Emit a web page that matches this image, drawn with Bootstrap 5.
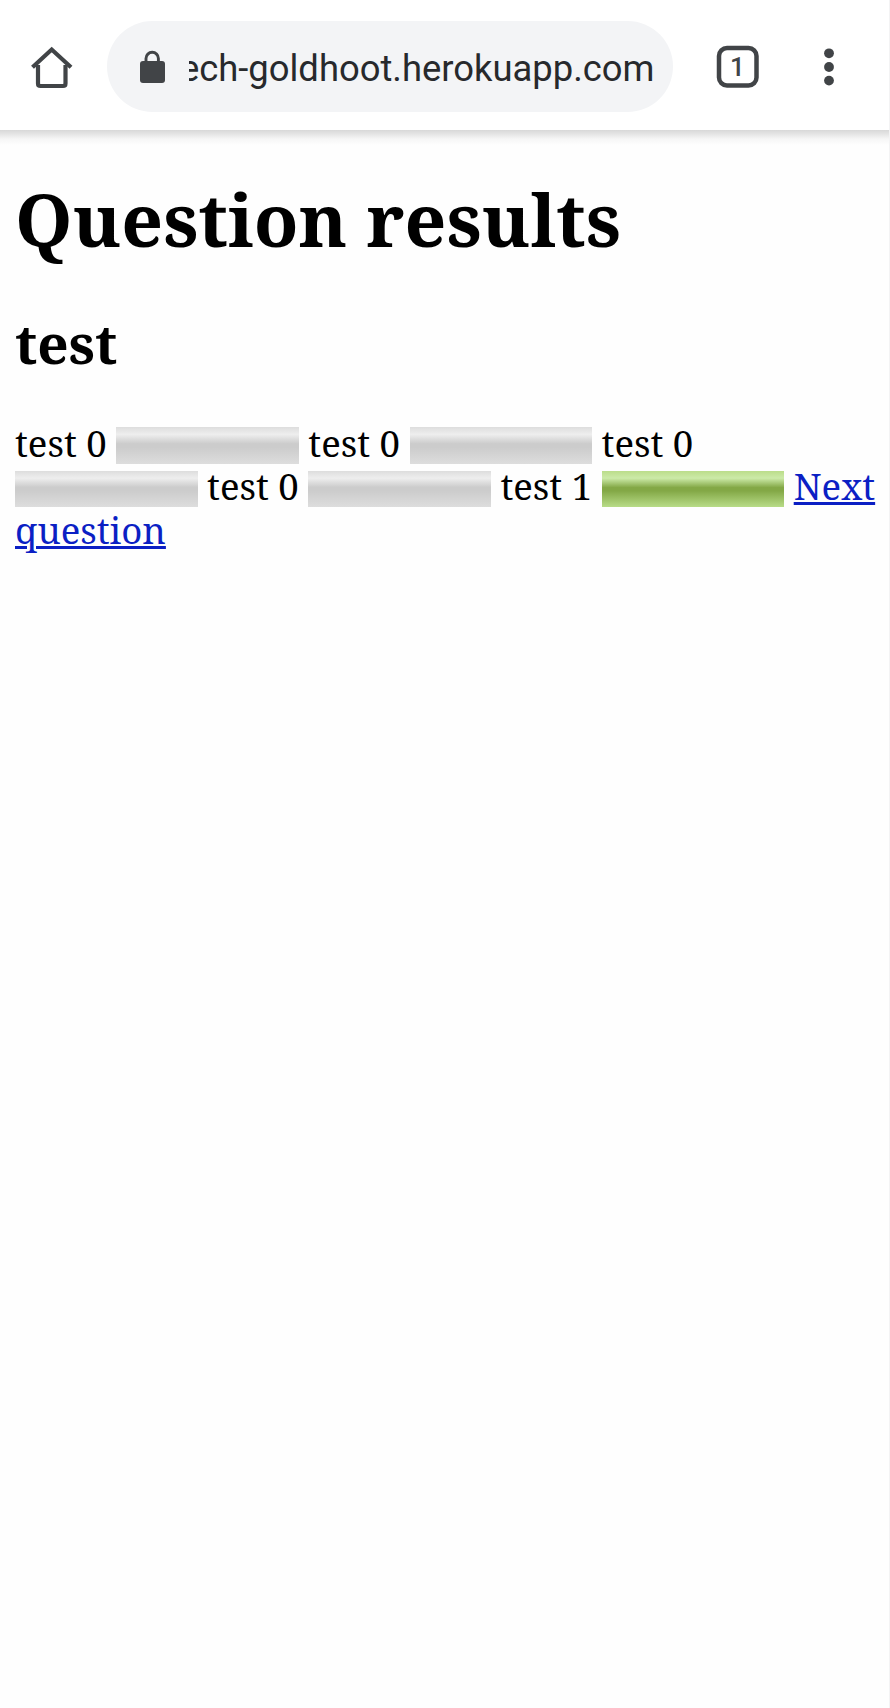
<!DOCTYPE html>
<html lang="en">
<head>
<meta charset="utf-8">
<meta name="viewport" content="width=device-width, initial-scale=1">
<title>Question results</title>
<link href="https://cdn.jsdelivr.net/npm/bootstrap@5.3.0/dist/css/bootstrap.min.css" rel="stylesheet">
<style>
body{background:#fefefe;color:#000;font-family:"Noto Serif","Droid Serif","Liberation Serif",serif;font-size:36.55px;line-height:43.3px;border-right:1px solid #f3f3f4;min-height:1708px}
.toolbar{height:130px;padding:21px 0 18px;background:#fff;color:#414447}
.toolbar::after{content:"";position:absolute;left:0;right:0;top:130px;height:15px;background:linear-gradient(#d8d8d8,#e4e4e4 25%,#f6f6f6 60%,#fefefe)}
.home-btn{width:106.500px;padding-left:30px}
.address{width:566.500px;height:91px;background:#f3f4f6;padding:0 18px 0 32px}
.url{width:466px;margin-left:23px;direction:rtl;font:36.4px/46px Roboto,sans-serif;color:#27292c;padding-top:5px}
.url bdi{direction:ltr}
.tabs-btn{margin-left:43px}
.menu-btn{margin-left:60px}
.tab-count{font:500 26px Roboto,sans-serif;fill:#414447}
main{padding:45px 10px 0 15px}
h1{font-size:73.14px;line-height:87px;font-weight:700;margin:0 0 48px}
h2{font-size:54.86px;line-height:65px;font-weight:700;margin:0 0 47px}
.meter-bar{width:182.6px;height:36.4px;vertical-align:-6.600px;background:linear-gradient(#ddd,#eee 20%,#ccc 45%,#ccc 55%,#ddd)}
.meter-bar.full{background:linear-gradient(#bbdd8a,#cceaa8 20%,#83a846 46%,#83a846 55%,#b8dc88)}
main a,main a:hover{color:#0b1fc4;text-decoration-thickness:2.7px}
</style>
</head>
<body>
<header class="toolbar d-flex align-items-center position-relative">
<div class="home-btn"><svg class="d-block" width="43" height="44" viewBox="0 0 43 44" fill="none" stroke="#414447" stroke-width="4.2" stroke-linejoin="round"><path d="M8 20V38.500Q8 41 10.500 41H33Q35.500 41 35.500 38.500V20"/><path d="M2.500 22.300L21.700 4.500L41 22.300" stroke-linejoin="miter"/></svg></div>
<div class="address rounded-pill d-flex align-items-center">
<svg class="flex-shrink-0" width="27" height="34" viewBox="0 0 27 34"><rect x="1" y="11" width="25" height="22" rx="3" fill="#414447"/><path d="M7 12V8.500a6.200 6.200 0 0 1 12.400 0V12" fill="none" stroke="#414447" stroke-width="2.900"/></svg>
<div class="url overflow-hidden text-nowrap"><bdi>ech-goldhoot.herokuapp.com</bdi></div>
</div>
<div class="tabs-btn"><svg class="d-block" width="43" height="43" viewBox="0 0 43 43"><rect x="3" y="3" width="37.500" height="37.500" rx="8" fill="none" stroke="#414447" stroke-width="4.500"/><text class="tab-count" x="21.500" y="31.300" text-anchor="middle">1</text></svg></div>
<div class="menu-btn"><svg class="d-block" width="20" height="40" viewBox="0 0 20 40" fill="#414447"><circle cx="10" cy="6.300" r="4.900"/><circle cx="10" cy="20" r="4.900"/><circle cx="10" cy="33.600" r="4.900"/></svg></div>
</header>
<main>
<h1>Question results</h1>
<h2>test</h2>
<p class="mb-0">test 0
<span class="meter-bar d-inline-block"></span>
test 0
<span class="meter-bar d-inline-block"></span>
test 0
<span class="meter-bar d-inline-block"></span>
test 0
<span class="meter-bar d-inline-block"></span>
test 1
<span class="meter-bar full d-inline-block"></span>
<a href="#">Next question</a></p>
</main>
<script src="https://cdn.jsdelivr.net/npm/bootstrap@5.3.0/dist/js/bootstrap.bundle.min.js"></script>
</body>
</html>
